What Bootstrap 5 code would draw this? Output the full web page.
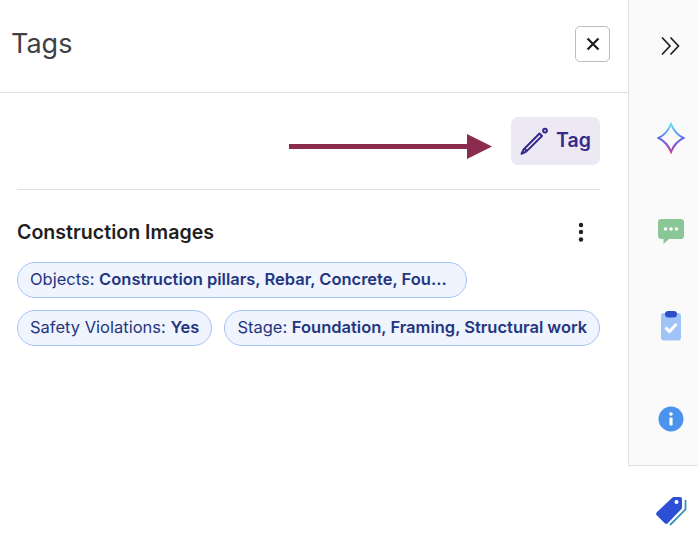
<!DOCTYPE html>
<html lang="en">

<head>
  <meta charset="UTF-8">
  <meta name="viewport" content="width=device-width, initial-scale=1.0">
  <title>Tags</title>
  <link href="https://cdn.jsdelivr.net/npm/bootstrap@5.3.0/dist/css/bootstrap.min.css" rel="stylesheet">
  <style>
    html, body { height: 100%; overflow: hidden; }
    body { font-family: Inter, "Liberation Sans", sans-serif; background: #fff; }
    .shell { height: 544px; }
    .panel { width: 628px; }
    .panel-top { height: 93px; border-bottom: 1px solid #e0e0e0; padding: 0 18px 4px 11px; }
    .panel-title { font-size: 27px; font-weight: 400; color: #3f4045; margin: 0; }
    .close-box { width: 35px; height: 36px; padding: 0; background: #fff; border: 1px solid #bdbdbd; border-radius: 5px; }
    .panel-body { position: relative; padding: 24px 28px 0 17px; }
    .tag-btn { width: 89px; height: 48px; padding: 0; background: #ece9f5; color: #36298a; font-size: 19.5px; font-weight: 600; border: 0; border-radius: 7px; }
    .tag-btn:hover { background: #ece9f5; color: #36298a; }
    .rule-line { height: 1px; background: #e0e0e0; margin-top: 24px; }
    .pointer-arrow { position: absolute; left: 289px; top: 41px; }
    .group-title { font-size: 19.6px; font-weight: 600; color: #1f1f22; margin: 0; }
    .group-head { height: 24px; margin-top: 31px; }
    .kebab { margin-bottom: 2px; }
    .chip-wrap { margin-top: 17px; gap: 12px; }
    .chip-row { gap: 12px; }
    .chip { height: 36px; padding: 0 12px; font-size: 16.5px; color: #24367f; background: #eff4fe; border: 1px solid #a3c5f7; border-radius: 18px; line-height: 32px; white-space: nowrap; }
    .chip b { font-weight: 600; }
    .chip-cut { width: 450px; overflow: hidden; text-overflow: ellipsis; }
    .rail { width: 70px; }
    .rail-top { height: 466px; background: #fafafa; border-left: 1px solid #e0e0e0; border-bottom: 1px solid #e0e0e0; }
    .rail-cell { height: 93px; padding-left: 15px; }
    .rail-cell:nth-child(1) { height: 91px; }
    .rail-cell:nth-child(3) { height: 95px; }
    .rail-bottom { height: 78px; padding-top: 12px; padding-left: 15px; }
  </style>
</head>

<body>
  <div class="shell d-flex">
    <div class="panel flex-shrink-0">
      <div class="panel-top d-flex align-items-center justify-content-between">
        <h1 class="panel-title">Tags</h1>
        <button class="close-box d-flex align-items-center justify-content-center" aria-label="Close">
          <svg width="14" height="14" viewBox="0 0 14 14"><path d="M1.5 1.5l11 11M12.5 1.5l-11 11" stroke="#1f1f22" stroke-width="2.2" fill="none"/></svg>
        </button>
      </div>

      <div class="panel-body">
        <div class="d-flex justify-content-end">
          <button class="btn tag-btn d-flex align-items-center justify-content-center gap-2">
            <svg width="28" height="28" viewBox="0 0 28 28" fill="none" stroke="#36298a" stroke-width="2" stroke-linejoin="round">
              <path d="M19.500 6.500L3.800 22.200 1.500 26.800 6.200 24.600 22 9z"/>
              <path d="M4.500 21.600l2.400 2.400"/>
              <circle cx="25" cy="3.600" r="1.900"/>
            </svg>
            <span>Tag</span>
          </button>
        </div>

        <!-- annotation arrow over the page -->
        <svg class="pointer-arrow" width="204" height="26" viewBox="0 0 204 26">
          <rect x="0" y="10" width="180" height="5" fill="#8b2c4e"/>
          <polygon points="178,0 203,12.500 178,25" fill="#8b2c4e"/>
        </svg>

        <div class="rule-line"></div>

        <div class="group-head d-flex align-items-center justify-content-between">
          <h2 class="group-title">Construction Images</h2>
          <svg class="kebab me-3" width="6" height="20" viewBox="0 0 6 20" fill="#1f1f22">
            <circle cx="3" cy="3" r="2.200"/><circle cx="3" cy="10" r="2.200"/><circle cx="3" cy="17.500" r="2.200"/>
          </svg>
        </div>

        <div class="chip-wrap d-flex flex-column align-items-start">
          <span class="chip chip-cut">Objects: <b>Construction pillars, Rebar, Concrete, Fou...</b></span>
          <div class="chip-row d-flex">
            <span class="chip">Safety Violations: <b>Yes</b></span>
            <span class="chip">Stage: <b>Foundation, Framing, Structural work</b></span>
          </div>
        </div>
      </div>
    </div>

    <div class="rail flex-shrink-0">
      <div class="rail-top">
        <div class="rail-cell d-flex align-items-center justify-content-center">
          <svg width="20" height="20" viewBox="0 0 20 20" fill="none" stroke="#1f1f22" stroke-width="1.700"><path d="M1 1.500l8 8.500-8 8.500M9.500 1.500l8 8.500-8 8.500"/></svg>
        </div>
        <div class="rail-cell d-flex align-items-center justify-content-center">
          <svg width="28" height="32" viewBox="0 0 28 32" fill="none" stroke-width="2" stroke="url(#sparkFill)">
            <defs>
              <linearGradient id="sparkFill" gradientUnits="userSpaceOnUse" x1="14" y1="2" x2="14" y2="30">
                <stop offset="0" stop-color="#5fe0f5"/><stop offset=".45" stop-color="#5b7cf5"/><stop offset=".8" stop-color="#8a4fd8"/><stop offset="1" stop-color="#c2418f"/>
              </linearGradient>
            </defs>
            <path d="M14 2Q18 12 26.500 16 18 20 14 30 10 20 1.500 16 10 12 14 2z"/>
          </svg>
        </div>
        <div class="rail-cell d-flex align-items-center justify-content-center">
          <svg width="28" height="28" viewBox="0 0 28 28">
            <path d="M4 1h20a3 3 0 0 1 3 3v14a3 3 0 0 1-3 3H12l-5.500 5v-5H4a3 3 0 0 1-3-3V4a3 3 0 0 1 3-3z" fill="#8ac796"/>
            <circle cx="8.500" cy="11" r="1.800" fill="#fff"/><circle cx="14" cy="11" r="1.800" fill="#fff"/><circle cx="19.500" cy="11" r="1.800" fill="#fff"/>
          </svg>
        </div>
        <div class="rail-cell d-flex align-items-center justify-content-center">
          <svg width="22" height="30" viewBox="0 0 22 30">
            <rect x="1" y="2" width="20" height="27.500" rx="3" fill="#a0c4f8"/>
            <rect x="5" y="0" width="12" height="6.500" rx="3.200" fill="#2f4fc9"/>
            <path d="M5.500 16.500l4 4 7-7.500" fill="none" stroke="#fff" stroke-width="3"/>
          </svg>
        </div>
        <div class="rail-cell d-flex align-items-center justify-content-center">
          <svg width="26" height="26" viewBox="0 0 26 26">
            <circle cx="13" cy="13" r="12.500" fill="#4c93ee"/>
            <circle cx="13" cy="8" r="1.800" fill="#fff"/>
            <rect x="11.400" y="11.500" width="3.200" height="8" rx="1" fill="#fff"/>
          </svg>
        </div>
      </div>
      <div class="rail-bottom d-flex align-items-center justify-content-center">
        <svg width="32" height="30" viewBox="0 0 32 30">
          <path d="M30.500 4v9.500L15 29" fill="none" stroke="#3b93b8" stroke-width="1.800"/>
          <path d="M19 1h6a2 2 0 0 1 2 2v8.500a2 2 0 0 1-.6 1.400L13 27a2.500 2.500 0 0 1-3.500 0L2 19.500a2.500 2.500 0 0 1 0-3.500L17.500 1.600A2 2 0 0 1 19 1z" fill="#2d4fd6"/>
          <circle cx="21.500" cy="6" r="2" fill="#fff"/>
        </svg>
      </div>
    </div>
  </div>

  <script src="https://cdn.jsdelivr.net/npm/bootstrap@5.3.0/dist/js/bootstrap.bundle.min.js"></script>
</body>

</html>
